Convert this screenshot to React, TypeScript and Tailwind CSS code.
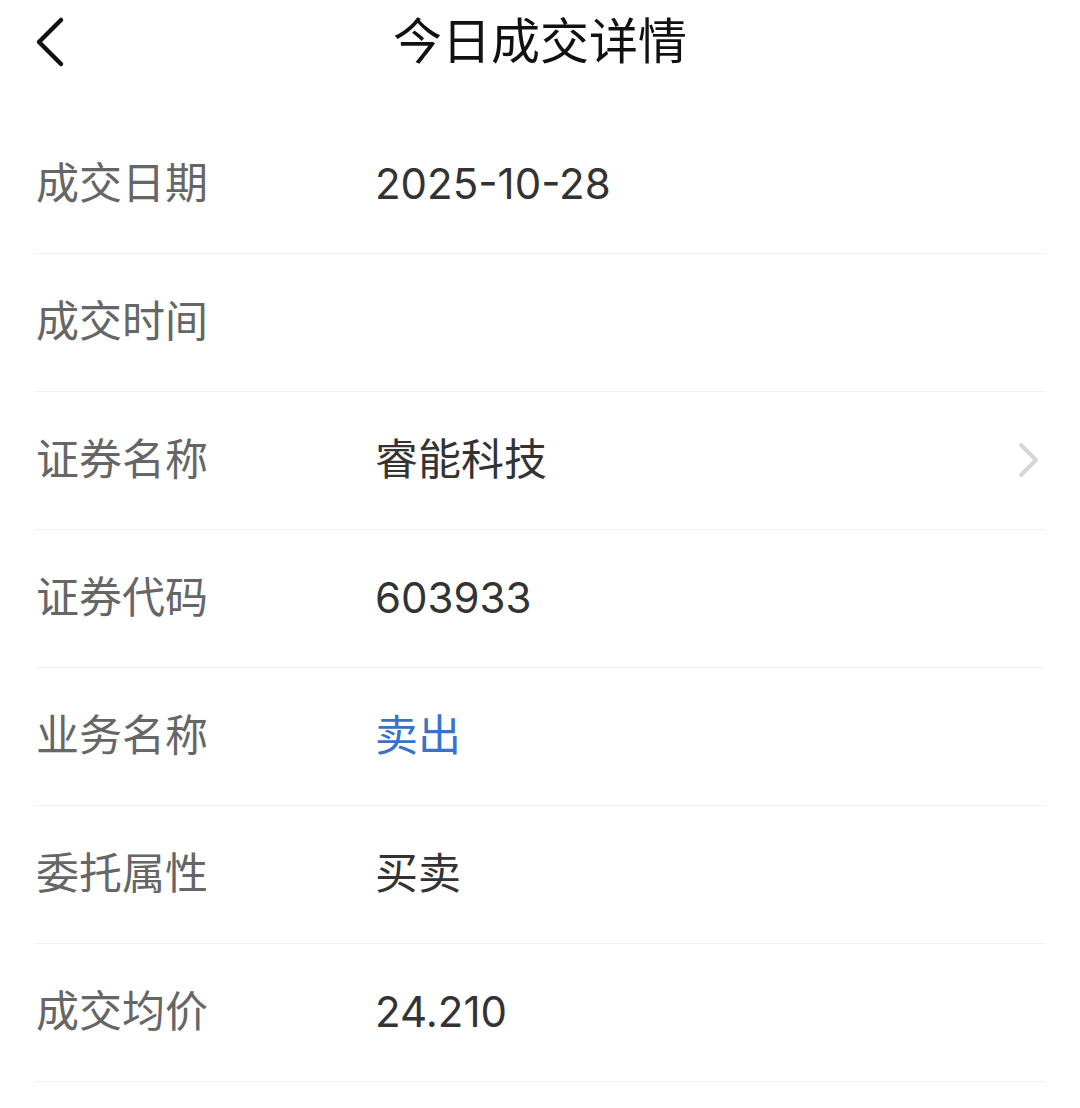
import React from "react";

interface DetailRow {
  label: string;
  value?: string;
  tone?: "default" | "blue";
  link?: boolean;
  numeric?: boolean;
}

const rows: DetailRow[] = [
  { label: "成交日期", value: "2025-10-28", numeric: true },
  { label: "成交时间" },
  { label: "证券名称", value: "睿能科技", link: true },
  { label: "证券代码", value: "603933", numeric: true },
  { label: "业务名称", value: "卖出", tone: "blue" },
  { label: "委托属性", value: "买卖" },
  { label: "成交均价", value: "24.210", numeric: true },
];

const font = {
  fontFamily: 'Inter, "Noto Sans CJK SC", "Noto Sans", sans-serif',
};

export default function App() {
  return (
    <div className="min-h-[1108px] w-[1080px] bg-white" style={font}>
      {/* Header */}
      <div className="relative flex h-[84px] items-center justify-center pb-[2px]">
        <button className="absolute left-[30px] top-[14px] flex h-[56px] w-[40px] items-center justify-center" aria-label="返回">
          <svg width="32" height="52" viewBox="0 0 32 52" fill="none">
            <path d="M27 4 L5 26 L27 48" stroke="#111" strokeWidth="4.5" strokeLinecap="round" strokeLinejoin="round" />
          </svg>
        </button>
        <h1 className="text-[49px] leading-none text-[#111]">今日成交详情</h1>
      </div>

      {/* Rows */}
      <div className="px-[35px] pt-[32px]">
        {rows.map((row) => (
          <div key={row.label} className="flex h-[138px] items-center border-b border-[#f0f0f0] pb-[2px]">
            <span className="w-[340px] pl-[1px] text-[43px] leading-none text-[#666]">{row.label}</span>
            <span
              className={`flex-1 leading-none ${row.numeric ? "text-[42px]" : "text-[43px]"} ${
                row.tone === "blue" ? "text-[#3a72c9]" : "text-[#333]"
              }`}
            >
              {row.value}
            </span>
            {row.link && (
              <svg width="24" height="36" viewBox="0 0 24 36" fill="none" className="mr-[4px]">
                <path d="M4 3 L19 18 L4 33" stroke="#d6d6d6" strokeWidth="4" strokeLinecap="round" strokeLinejoin="round" />
              </svg>
            )}
          </div>
        ))}
      </div>
    </div>
  );
}
